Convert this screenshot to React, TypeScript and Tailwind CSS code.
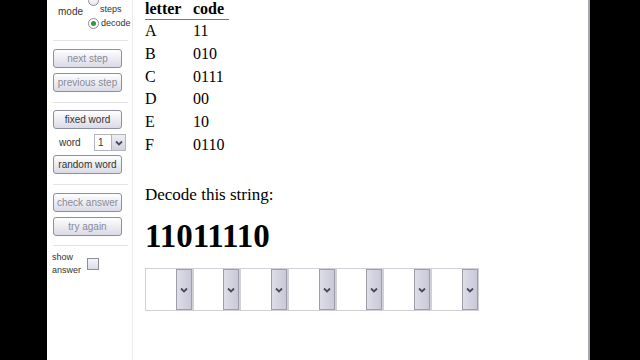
import React from 'react'

const rows: [string, string][] = [
  ['A', '11'],
  ['B', '010'],
  ['C', '0111'],
  ['D', '00'],
  ['E', '10'],
  ['F', '0110'],
]

const ui = { fontFamily: '"Liberation Sans", Arial, sans-serif' }
const serif = { fontFamily: '"Liberation Serif", "Times New Roman", serif' }

function Btn({ label, dim }: { label: string; dim?: boolean }) {
  return (
    <div
      className={`h-[19px] w-[69px] rounded-[3px] border border-[#8d8ea2] bg-gradient-to-b from-white to-[#d9dae6] flex items-center justify-center text-[10px] ${dim ? 'text-[#8a8a96]' : 'text-[#333]'}`}
    >
      {label}
    </div>
  )
}

function Chevron() {
  return (
    <svg width="8" height="6" viewBox="0 0 8 6">
      <path d="M1 1.5 L4 4.5 L7 1.5" fill="none" stroke="#4a4a5a" strokeWidth="1.8" />
    </svg>
  )
}

function Divider() {
  return <div className="h-px w-[75px] bg-[#e2e2e6] ml-[6px]" />
}

export default function App() {
  return (
    <div className="w-[640px] h-[360px] bg-black flex overflow-hidden">
      <div className="w-[47px]" />
      <div className="w-[86px] bg-white border-r border-[#ececf0] flex flex-col text-[#333]" style={ui}>
        <div className="flex h-[36px] relative">
          <div className="text-[10px] ml-[11px] mt-[4px]">mode</div>
          <div className="absolute left-[41px] top-[-5px] flex items-start gap-[1px] text-[9px]">
            <span className="w-[11px] h-[11px] rounded-full border border-[#8e8e9a] bg-gradient-to-b from-white to-[#e6e6ee]" />
            <span className="mt-[8px]">steps</span>
          </div>
          <div className="absolute left-[41px] top-[17px] flex items-center gap-[2px] text-[9px]">
            <span className="w-[11px] h-[11px] rounded-full border border-[#8e8e9a] bg-white flex items-center justify-center">
              <span className="w-[5px] h-[5px] rounded-full bg-[#2e9a3c]" />
            </span>
            <span>decode</span>
          </div>
        </div>
        <div className="mt-[4px]"><Divider /></div>
        <div className="flex flex-col gap-[5px] pl-[6px] mt-[8px]">
          <Btn label="next step" dim />
          <Btn label="previous step" dim />
        </div>
        <div className="mt-[10px]"><Divider /></div>
        <div className="flex flex-col pl-[6px] mt-[7px]">
          <Btn label="fixed word" />
          <div className="flex items-center h-[17px] mt-[5px] mb-[4px]">
            <span className="text-[10px] ml-[6px] w-[35px]">word</span>
            <div className="w-[32px] h-[17px] border border-[#b4b4be] flex bg-white">
              <span className="flex-1 text-[10px] pl-[3px] leading-[15px]">1</span>
              <span className="w-[14px] border-l border-[#b4b4be] bg-gradient-to-b from-[#eeeef4] to-[#d2d2de] flex items-center justify-center">
                <Chevron />
              </span>
            </div>
          </div>
          <Btn label="random word" />
        </div>
        <div className="mt-[10px]"><Divider /></div>
        <div className="flex flex-col gap-[5px] pl-[6px] mt-[8px]">
          <Btn label="check answer" dim />
          <Btn label="try again" dim />
        </div>
        <div className="mt-[9px]"><Divider /></div>
        <div className="flex items-center mt-[5px] pl-[5px]">
          <div className="text-[9px] leading-[13px] w-[35px]">show<br />answer</div>
          <span className="w-[12px] h-[12px] border border-[#8e8e9a] bg-gradient-to-b from-[#f4f4f8] to-[#dcdce4]" />
        </div>
      </div>
      <div className="w-[455px] bg-white pl-[12px] text-black" style={serif}>
        <div className="w-[84px] border-b border-[#777] flex text-[16px] font-bold leading-[18px] pb-[1px]">
          <span className="w-[48px]">letter</span>
          <span>code</span>
        </div>
        <div className="flex flex-col text-[16px] leading-[22.8px]">
          {rows.map(([l, c]) => (
            <div key={l} className="flex">
              <span className="w-[48px]">{l}</span>
              <span>{c}</span>
            </div>
          ))}
        </div>
        <div className="text-[17px] mt-[25px]">Decode this string:</div>
        <div className="text-[33px] font-bold mt-[10px] leading-[38px]">11011110</div>
        <div className="flex mt-[13px]">
          {Array.from({ length: 7 }).map((_, i) => (
            <div key={i} className="w-[47.7px] h-[43px] border border-[#d0d0d6] bg-white flex justify-end">
              <span className="w-[16px] border border-[#9d9dab] bg-gradient-to-r from-[#dedee8] to-[#c8c8d8] flex items-center justify-center">
                <Chevron />
              </span>
            </div>
          ))}
        </div>
      </div>
      <div className="w-[2px] bg-[#a8a4ac]" />
      <div className="flex-1 bg-black" />
    </div>
  )
}
